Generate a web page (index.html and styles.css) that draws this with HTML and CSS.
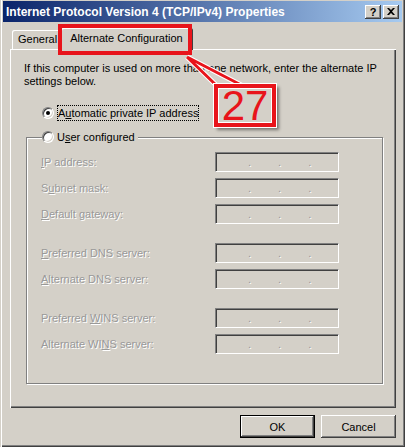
FILE: index.html
```html
<!DOCTYPE html>
<html lang="en">
<head>
  <meta charset="UTF-8" />
  <title>Internet Protocol Version 4 (TCP/IPv4) Properties</title>
  <link rel="stylesheet" href="styles.css">
</head>
<body>
  <div class="window">
    <div class="titlebar">
      <span class="title">Internet Protocol Version 4 (TCP/IPv4) Properties</span>
      <div class="caption-buttons">
        <span class="cap-btn help">?</span>
        <span class="cap-btn">
          <svg width="8" height="7" viewBox="0 0 8 7"><path d="M0 0h2l2 2 2-2h2L5 3.5 8 7H6L4 5 2 7H0l3-3.5z" fill="#000"/></svg>
        </span>
      </div>
    </div>

    <div class="content">
      <div class="tabs">
        <div class="tab">General</div>
        <div class="tab active">Alternate Configuration</div>
      </div>

      <div class="panel">
        <p class="intro">If this computer is used on more than one network, enter the alternate IP settings below.</p>

        <div class="radio-row auto">
          <span class="radio checked"></span>
          <span class="focus">A<u>u</u>tomatic private IP address</span>
        </div>

        <fieldset class="group">
          <legend class="radio-row">
            <span class="radio"></span>
            <span>U<u>s</u>er configured</span>
          </legend>

          <div class="fields">
            <div class="field"><span class="label"><u>I</u>P address:</span><span class="ipbox"><i>.</i><i>.</i><i>.</i></span></div>
            <div class="field"><span class="label">S<u>u</u>bnet mask:</span><span class="ipbox"><i>.</i><i>.</i><i>.</i></span></div>
            <div class="field"><span class="label"><u>D</u>efault gateway:</span><span class="ipbox"><i>.</i><i>.</i><i>.</i></span></div>
          </div>
          <div class="fields">
            <div class="field"><span class="label"><u>P</u>referred DNS server:</span><span class="ipbox"><i>.</i><i>.</i><i>.</i></span></div>
            <div class="field"><span class="label"><u>A</u>lternate DNS server:</span><span class="ipbox"><i>.</i><i>.</i><i>.</i></span></div>
          </div>
          <div class="fields">
            <div class="field"><span class="label">Preferred <u>W</u>INS server:</span><span class="ipbox"><i>.</i><i>.</i><i>.</i></span></div>
            <div class="field"><span class="label">Alternate WI<u>N</u>S server:</span><span class="ipbox"><i>.</i><i>.</i><i>.</i></span></div>
          </div>
        </fieldset>
      </div>

      <div class="buttons">
        <button class="btn default">OK</button>
        <button class="btn">Cancel</button>
      </div>
    </div>

    <!-- annotation overlay -->
    <div class="mark tab-mark"></div>
    <svg class="pointer" width="405" height="447">
      <path d="M187 57 L217 86 M187 57 L243 86" stroke="#fff" stroke-width="5" fill="none"/>
      <path d="M187 57 L217 86 M187 57 L243 86" stroke="#e8141b" stroke-width="3" fill="none"/>
    </svg>
    <div class="mark callout">27</div>
  </div>
</body>
</html>
```

FILE: styles.css
```css
body {
  margin: 0;
  background: #d4d0c8;
  font-family: "Liberation Sans", Arial, sans-serif;
  font-size: 11px;
  color: #000;
}
.window {
  position: relative;
  width: 405px;
  height: 447px;
  box-sizing: border-box;
  padding: 1px 3px 3px 3px;
  box-shadow: inset 1px 0 #d4d0c8, inset 2px 0 #fff, inset -1px -1px #404040, inset -2px -2px #808080;
}
.titlebar {
  display: flex;
  align-items: center;
  justify-content: space-between;
  height: 21px;
  padding: 0 3px 0 3px;
  background: linear-gradient(to right, #0a246a, #a6caf0);
}
.title {
  color: #fff;
  font-weight: bold;
  font-size: 12px;
}
.caption-buttons {
  display: flex;
  gap: 2px;
}
.cap-btn {
  display: flex;
  align-items: center;
  justify-content: center;
  width: 16px;
  height: 14px;
  box-sizing: border-box;
  background: #d4d0c8;
  box-shadow: inset -1px -1px #404040, inset 1px 1px #fff, inset -2px -2px #808080;
  font-weight: bold;
  font-size: 11px;
}
.content {
  padding: 0 6px 0 7px;
}
.tabs {
  display: flex;
  align-items: flex-end;
  height: 27px;
  padding-left: 2px;
}
.tab {
  height: 19px;
  box-sizing: border-box;
  padding: 3px 6px 0 6px;
  border-radius: 2px 2px 0 0;
  box-shadow: inset 1px 1px #fff, inset -1px 0 #404040, inset -2px 0 #808080;
  position: relative;
}
.tab.active {
  height: 22px;
  margin: 0 -2px -1px -2px;
  padding: 4px 10px 0 9px;
  background: #d4d0c8;
  z-index: 1;
}
.panel {
  height: 359px;
  box-sizing: border-box;
  padding: 13px 0 0 14px;
  box-shadow: inset 1px 1px #fff, inset -1px -1px #404040, inset -2px -2px #808080;
}
.intro {
  margin: 0;
  line-height: 13px;
  width: 360px;
}
.radio-row {
  display: flex;
  align-items: center;
  gap: 3px;
}
.radio-row.auto {
  margin: 17px 0 0 18px;
  height: 16px;
}
.radio {
  width: 12px;
  height: 12px;
  box-sizing: border-box;
  border-radius: 50%;
  background: #fff;
  border: 1px solid;
  border-color: #808080 #fff #fff #808080;
  box-shadow: inset 1px 1px #404040, inset -1px -1px #d4d0c8;
  position: relative;
}
.radio.checked::after {
  content: "";
  position: absolute;
  left: 3px;
  top: 3px;
  width: 4px;
  height: 4px;
  border-radius: 50%;
  background: #000;
}
.focus {
  padding: 1px 0;
  border: 1px dotted #000;
}
.group {
  margin: 8px 13px 0 2px;
  padding: 7px 0 29px 14px;
  border: 1px solid #808080;
  box-shadow: inset 1px 1px #fff, 1px 1px #fff;
}
.group legend {
  padding: 0 3px 0 0;
  height: 16px;
  background: #d4d0c8;
  margin-left: 1px;
}
.fields {
  display: flex;
  flex-direction: column;
  gap: 6px;
}
.fields + .fields {
  margin-top: 19px;
}
.field {
  display: flex;
  align-items: center;
  height: 20px;
}
.label {
  width: 174px;
  color: #999;
  text-shadow: 1px 1px #fff;
}
.ipbox {
  display: flex;
  gap: 27px;
  width: 124px;
  height: 20px;
  box-sizing: border-box;
  padding: 3px 0 0 32px;
  border: 1px solid;
  border-color: #808080 #fff #fff #808080;
  box-shadow: inset 1px 1px #404040, inset -1px -1px #d4d0c8;
}
.ipbox i {
  font-style: normal;
  color: #999;
  text-shadow: 1px 1px #fff;
}
.buttons {
  display: flex;
  justify-content: flex-end;
  gap: 6px;
  margin-top: 7px;
}
.btn {
  width: 75px;
  height: 23px;
  font: inherit;
  background: #d4d0c8;
  border: none;
  box-shadow: inset -1px -1px #404040, inset 1px 1px #fff, inset -2px -2px #808080;
}
.btn.default {
  border: 1px solid #000;
}
.mark {
  position: absolute;
  box-sizing: border-box;
  border: 4px solid #e8141b;
}
.tab-mark {
  left: 58px;
  top: 24px;
  width: 134px;
  height: 31px;
  z-index: 2;
}
.pointer {
  position: absolute;
  left: 0;
  top: 0;
  z-index: 2;
}
.callout {
  left: 214px;
  top: 84px;
  width: 62px;
  height: 43px;
  background: #d4d0c8;
  box-shadow: inset 0 0 0 1px #fff, 0 0 0 1px #fff, 3px 3px 3px rgba(0, 0, 0, 0.45);
  color: #e8141b;
  font-size: 42px;
  line-height: 35px;
  text-align: center;
  z-index: 3;
}
```
